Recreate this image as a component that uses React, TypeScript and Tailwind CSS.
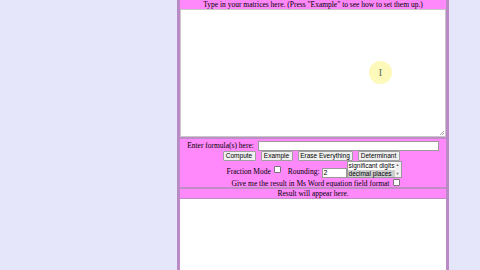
import React from 'react';

const serif = { fontFamily: '"Liberation Serif", "Times New Roman", serif' };
const sans = { fontFamily: '"Liberation Sans", Arial, sans-serif' };

function Btn({ label, w }: { label: string; w: string }) {
  return (
    <button
      className={`h-[10px] ${w} px-0 whitespace-nowrap border border-[#a0a0a0] bg-[#f0f0f0] rounded-[1px] text-[6.5px] leading-none text-black`}
      style={sans}
    >
      {label}
    </button>
  );
}

function Box() {
  return <span className="inline-block w-[7px] h-[7px] border border-[#767676] bg-white rounded-[1px]" />;
}

export default function App() {
  return (
    <div className="w-[480px] h-[270px] overflow-hidden bg-[#e6e6fa] relative" style={serif}>
      <div className="ml-[177px] w-[272px] h-[270px] border-x-[3px] border-[#b98ac6] bg-[#ff88fb] flex flex-col">
        {/* matrices input */}
        <div className="h-[9px] text-center text-[7.5px] leading-[9px] text-black">
          Type in your matrices here. (Press "Example" to see how to set them up.)
        </div>
        <div className="relative">
          <textarea
            className="block h-[128px] w-full bg-white border border-[#c8c8c8] outline-none resize-none"
            defaultValue=""
          />
          <svg className="absolute right-[1px] bottom-[1px]" width="6" height="6" viewBox="0 0 6 6">
            <path d="M5 1 L1 5 M5 3 L3 5" stroke="#9a9a9a" strokeWidth="0.8" />
          </svg>
        </div>
        <div className="h-[2px] bg-[#c18dc9]" />

        {/* formula section */}
        <div className="h-[48px] flex flex-col items-center text-[7.5px] text-black">
          <div className="flex items-center gap-[4px] h-[11px] mt-[1px]">
            <span>Enter formula(s) here:</span>
            <span className="inline-block w-[181px] h-[10px] bg-white border border-[#9a9a9a]" />
          </div>
          <div className="flex items-center gap-[5px] h-[10px] mr-[4px]">
            <Btn label="Compute" w="w-[33px]" />
            <Btn label="Example" w="w-[32px]" />
            <Btn label="Erase Everything" w="w-[55px]" />
            <Btn label="Determinant" w="w-[42px]" />
          </div>
          <div className="flex items-end h-[18px] ml-[2px]">
            <span className="mb-[2px]">Fraction Mode</span>
            <span className="ml-[3px] mb-[3px]"><Box /></span>
            <span className="ml-[7px] mb-[2px]">Rounding:</span>
            <span
              className="ml-[2px] w-[25px] h-[10px] bg-white border border-[#9a9a9a] text-[7px] leading-[8px] pl-[1px] mb-[1px]"
              style={sans}
            >
              2
            </span>
            <div
              className="w-[55px] h-[17px] bg-white border border-[#9a9a9a] flex text-[6.5px] leading-[7.5px] text-black mb-[1px]"
              style={sans}
            >
              <div className="flex-1 flex flex-col">
                <span className="pl-[1px] whitespace-nowrap">significant digits</span>
                <span className="pl-[1px] whitespace-nowrap bg-[#cecece]">decimal places</span>
              </div>
              <div className="w-[6px] bg-[#f1f1f1] flex flex-col items-center justify-between text-[4px] leading-[6px] text-[#777]">
                <span>▲</span>
                <span>▼</span>
              </div>
            </div>
          </div>
          <div className="flex items-center h-[9px] ml-[6px]">
            <span>Give me the result in Ms Word equation field format</span>
            <span className="ml-[4px]"><Box /></span>
          </div>
        </div>
        <div className="h-[2px] bg-[#c18dc9]" />

        {/* result */}
        <div className="h-[9px] text-center text-[7.5px] leading-[9px] text-black">Result will appear here.</div>
        <div className="h-[1px] bg-[#c18dc9]" />
        <div className="flex-1 bg-white" />
      </div>

      {/* cursor highlight */}
      <div className="absolute left-[369px] top-[61px] w-[23px] h-[23px] rounded-full bg-[#fdf9b4] opacity-90 flex items-center justify-center">
        <span className="text-[10px] leading-none text-[#555]" style={serif}>I</span>
      </div>
    </div>
  );
}
